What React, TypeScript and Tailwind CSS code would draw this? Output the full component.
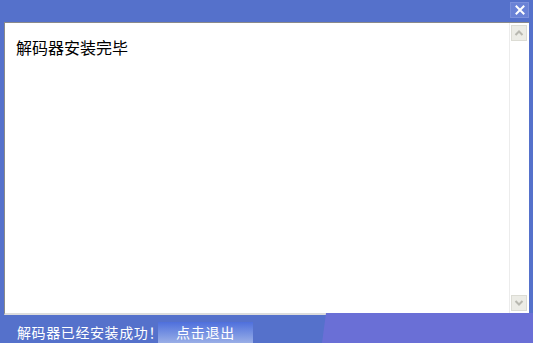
import React from "react";

export default function App() {
  return (
    <div
      className="relative w-[533px] h-[343px] overflow-hidden bg-[#5571cb] flex flex-col"
      style={{ fontFamily: '"Noto Sans CJK SC", "Noto Sans", sans-serif' }}
    >
      {/* title bar */}
      <div className="h-[22px] flex justify-end items-start pt-[2px] pr-[4px]">
        <div className="w-[19px] h-[16px] bg-[#6a82d6] border border-[#7b90dc] flex items-center justify-center">
          <svg width="10" height="10" viewBox="0 0 10 10">
            <path d="M1.5 1.5 L8.5 8.5 M8.5 1.5 L1.5 8.5" stroke="#ffffff" strokeWidth="2" strokeLinecap="square" />
          </svg>
        </div>
      </div>

      {/* content area */}
      <div className="ml-[4px] mr-[4px] h-[293px] bg-white border-t border-l border-[#8a8a8a] border-b-2 border-b-[#dcdcdc] flex">
        <div className="flex-1 pl-[11px] pt-[13px] text-[16px] leading-[22px] text-black">
          解码器安装完毕
        </div>
        <div className="w-[19px] mr-[1px] border-l border-[#ececec] flex flex-col justify-between pt-[2px] pb-[2px] pl-[1px]">
          <div className="w-[16px] h-[16px] bg-[#ecece6] border border-[#dcdcd4] flex items-center justify-center">
            <svg width="10" height="8" viewBox="0 0 10 8">
              <path d="M1.5 6 L5 2.5 L8.5 6" stroke="#b8b8b0" strokeWidth="2" fill="none" />
            </svg>
          </div>
          <div className="w-[16px] h-[16px] bg-[#ecece6] border border-[#dcdcd4] flex items-center justify-center">
            <svg width="10" height="8" viewBox="0 0 10 8">
              <path d="M1.5 2 L5 5.5 L8.5 2" stroke="#b8b8b0" strokeWidth="2" fill="none" />
            </svg>
          </div>
        </div>
      </div>

      {/* bottom bar */}
      <div className="flex-1 flex items-end pl-[17px] relative z-10">
        <div className="w-[141px] h-[21px] flex items-center text-white text-[14px] leading-[21px] tracking-[0.6px] whitespace-nowrap">
          解码器已经安装成功！
        </div>
        <div className="w-[95px] h-[21px] bg-gradient-to-b from-[#4f6fdc] to-[#9aaee6] flex items-center justify-center text-white text-[14px] tracking-[0.8px]">
          点击退出
        </div>
      </div>

      {/* purple decoration */}
      <div
        className="absolute left-[322px] top-[313px] w-[211px] h-[30px] bg-[#6a6fd6]"
        style={{ clipPath: "polygon(4px 0, 100% 0, 100% 100%, 0 100%)" }}
      />
    </div>
  );
}
